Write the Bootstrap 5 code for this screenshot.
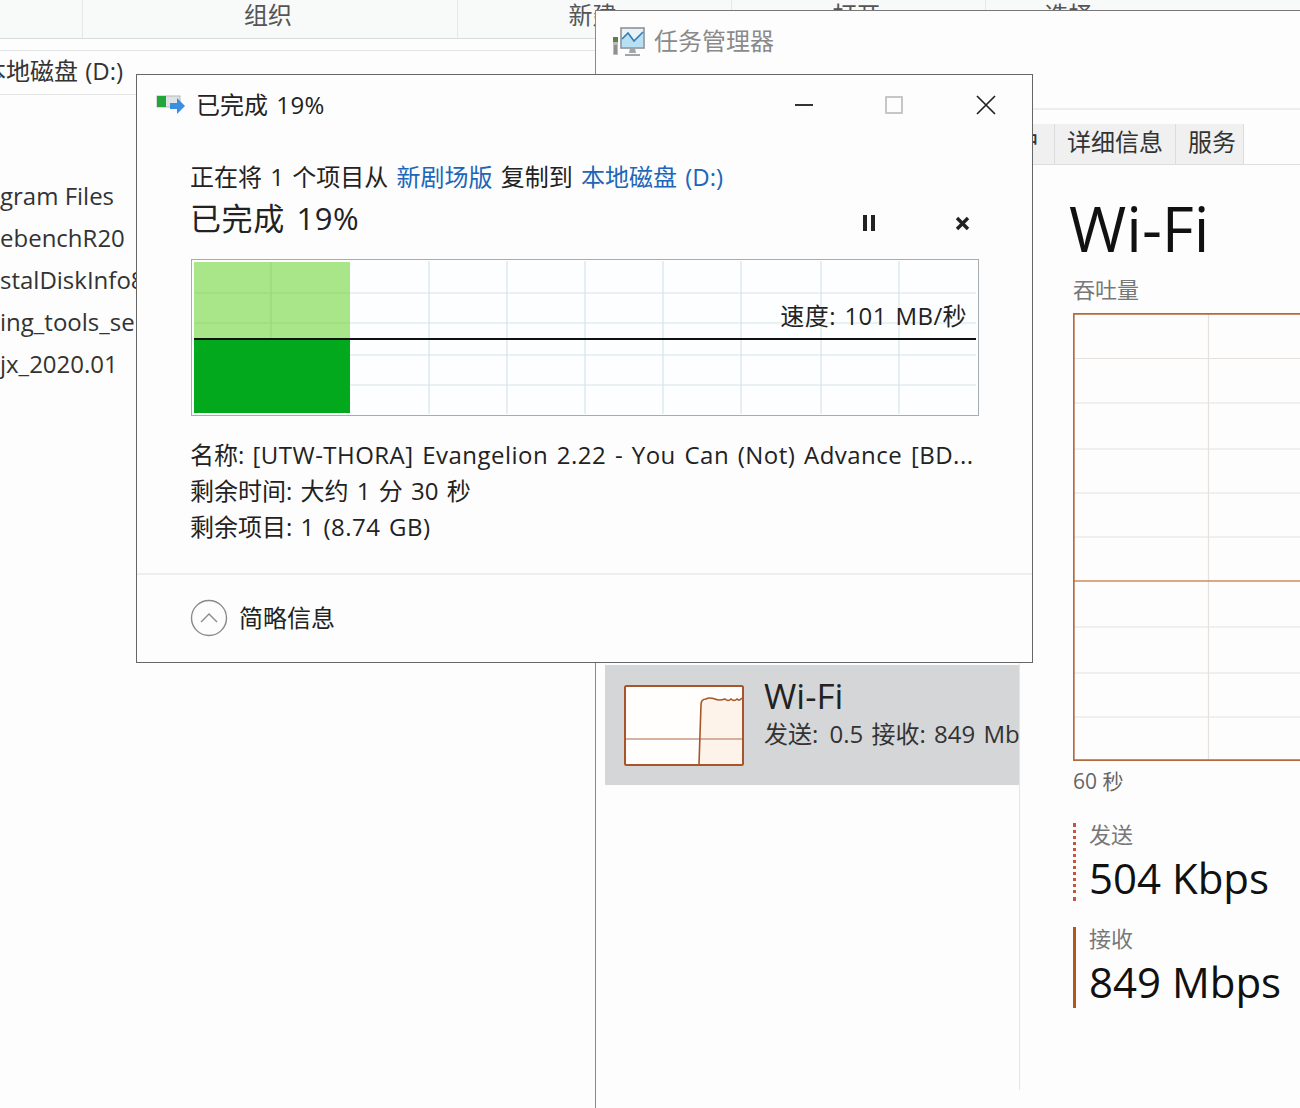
<!DOCTYPE html>
<html lang="zh-CN">
<head>
<meta charset="utf-8">
<title>已完成 19%</title>
<link href="https://cdn.jsdelivr.net/npm/bootstrap@5.3.0/dist/css/bootstrap.min.css" rel="stylesheet">
<style>
html,body{margin:0;padding:0}
body{width:1300px;height:1108px;position:relative;overflow:hidden;background:#fdfdfe;color:#222;font-family:"Open Sans","Noto Sans CJK SC",sans-serif;font-size:24px;line-height:36px}
.win{position:absolute;background:#fdfdfe}
.latin{letter-spacing:.47px}
/* explorer */
.win-explorer{left:0;top:0;width:1300px;height:1108px}
.ribbon{height:39px;background:#f8f9f9;border-bottom:1px solid #d9dadb;color:#555}
.ribbon-cell{border-left:1px solid #e6e7e7;height:38px;line-height:30px;text-align:center;padding-right:4px;white-space:nowrap}
.cell-a{width:82px;border-left:0}.cell-b{width:375px}.cell-c{width:274px}.cell-d{width:254px}.cell-e{width:170px}
.addr{margin-top:11px;height:45px;border-top:1px solid #e4e5e5;border-bottom:1px solid #e4e5e5;line-height:40px;color:#333}
.addr-text{margin-left:-18px;word-spacing:1px}
.files{margin-top:80px;line-height:42px;color:#333}
/* task manager */
.win-tm{left:595px;top:10px;width:705px;height:1098px;border-left:1px solid #8a8a8a;border-top:1px solid #777}
.tm-title{height:99px;padding:14px 0 0 16px;border-bottom:2px solid #eeeeee;color:#8a8a8a;line-height:32px}
.tm-tabs{height:41px;margin-top:14px;padding-left:384px;border-bottom:1px solid #ddd}
.tm-tab{height:40px;line-height:36px;padding:0 0 0 12px;background:#f0f0f0;border-right:1px solid #dcdcdc;color:#333;white-space:nowrap}
.tm-tab-long{width:121px}.tm-tab-short{width:68px}.tm-tab-user{width:75px}
.tm-body{height:925px}
.tm-left{width:424px;padding:500px 0 0 9px;border-right:1px solid #e6e6e6;overflow:hidden}
.wifi-item{height:120px;background:#d5d6d8;padding:20px 0 0 19px;gap:20px;overflow:hidden}
.thumb{width:120px;height:81px;flex:none;display:block}
.wifi-name{font-size:35px;line-height:36px;margin-top:-7px;color:#222}
.wifi-sub{line-height:36px;white-space:nowrap;color:#333;margin-top:2px;word-spacing:2px}
.sub-val{margin-left:3px}
.tm-right{padding-left:53px;flex:1;overflow:hidden}
.big-name{font-size:62px;line-height:70px;margin-top:28px;margin-left:-4px;color:#111}
.lbl{font-size:22px;line-height:22px;color:#777}
.lbl-first{margin-top:15px;margin-bottom:13px}
.tp-chart{display:block;width:227px;height:449px}
.sec{font-size:21px;line-height:30px;color:#666;margin-top:4px}
.stat{padding-left:13px}
.stat-send{margin-top:27px;border-left:3px dotted #c8553a;height:78px}
.stat-recv{margin-top:26px;border-left:3px solid #b5561f;height:81px}
.stat-val{font-size:42px;line-height:46px;color:#111;margin-top:10px;white-space:nowrap}
/* copy dialog */
.win-copy{left:136px;top:74px;width:897px;height:589px;border:1px solid #666;color:#222;word-spacing:2px}
.copy-title{height:60px;padding-left:19px;gap:10px}
.copy-ctrls{margin-left:auto;padding-right:36px}
.ctrl-min{width:18px;height:2px;background:#333;margin-right:72px}
.ctrl-max{width:18px;height:18px;border:2px solid #c4c6c8;border-radius:1px;margin-right:73px}
.copy-main{padding:24px 53px 0 53px}
.copy-link{color:#2066b8}
.copy-pct{font-size:31px;height:46px;line-height:46px;word-spacing:3px;letter-spacing:.6px}
.pct-ctrls{margin-left:auto;margin-top:10px;padding-right:9px;gap:79px}
.graph{margin-top:18px;margin-left:1px;height:157px;width:788px;position:relative;display:block}
.graph svg{display:block;width:788px;height:157px}
.speed{position:absolute;right:12px;top:39px;line-height:36px;white-space:nowrap;letter-spacing:.4px}
.info{margin-top:21px;white-space:nowrap}
.copy-foot{margin-top:28px;border-top:2px solid #eeeeee;height:88px;padding-left:53px;gap:11px}
</style>
</head>
<body>

<section class="win win-explorer">
  <div class="ribbon d-flex">
    <div class="ribbon-cell cell-a"></div>
    <div class="ribbon-cell cell-b">组织</div>
    <div class="ribbon-cell cell-c">新建</div>
    <div class="ribbon-cell cell-d">打开</div>
    <div class="ribbon-cell cell-e">选择</div>
  </div>
  <div class="addr"><div class="addr-text">本地磁盘 (D:)</div></div>
  <div class="files d-flex flex-column">
    <div>gram Files</div>
    <div>ebenchR20</div>
    <div>stalDiskInfo8</div>
    <div>ing_tools_se</div>
    <div>jx_2020.01</div>
  </div>
</section>

<section class="win win-tm">
  <div class="tm-title d-flex align-items-start gap-2">
    <svg width="34" height="32" viewBox="0 0 34 32" aria-hidden="true">
      <rect x="1" y="12" width="5" height="18" fill="#b9bcb9"/><rect x="1" y="12" width="5" height="5" fill="#5e7f4c"/><rect x="2" y="20" width="3" height="9" fill="#8d908c"/>
      <rect x="9" y="3" width="23" height="20" fill="#e9f2f8" stroke="#8d9295" stroke-width="1.6"/>
      <path d="M10 14 L16 8 L22 16 L31 7 L31 22 L10 22Z" fill="#b9dff3"/>
      <path d="M10 14 L16 8 L22 16 L31 7" fill="none" stroke="#2f7fb5" stroke-width="1.6"/>
      <path d="M18 23h5l1 5h-7zM13 29h15v2h-15z" fill="#a2a6a8"/>
    </svg>
    <div>任务管理器</div>
  </div>
  <div class="tm-tabs d-flex">
    <div class="tm-tab tm-tab-user">用户</div>
    <div class="tm-tab tm-tab-long">详细信息</div>
    <div class="tm-tab tm-tab-short">服务</div>
  </div>
  <div class="tm-body d-flex">
    <div class="tm-left">
      <div class="wifi-item d-flex">
        <svg class="thumb" viewBox="0 0 120 81" aria-hidden="true">
          <rect x="1" y="1" width="118" height="79" rx="1.5" fill="#fffefd" stroke="#a9552a" stroke-width="2"/>
          <path d="M75 79 L77 20 Q77 14 82 14 L118 14 L118 79Z" fill="#fdf3ea"/>
          <line x1="2" y1="54" x2="118" y2="54" stroke="#c79a80" stroke-width="1.3"/>
          <path d="M75 79 L77 20 Q77 14 82 14 C85 12 88 13 91 14 C95 16 98 15 101 14 C103 16 105 16 107 14 C109 16 111 16 113 14 C115 16 116 15 118 13" fill="none" stroke="#a9552a" stroke-width="1.6"/>
        </svg>
        <div>
          <div class="wifi-name">Wi-Fi</div>
          <div class="wifi-sub">发送: <span class="sub-val">0.5</span> 接收: 849 Mbps</div>
        </div>
      </div>
    </div>
    <div class="tm-right">
      <div class="big-name">Wi-Fi</div>
      <div class="lbl lbl-first">吞吐量</div>
      <svg class="tp-chart" viewBox="1073 313 227 449" aria-hidden="true">
        <g stroke="#e6e1dc" stroke-width="1.2">
          <line x1="1208.5" y1="313" x2="1208.5" y2="761"/>
          <line x1="1073" y1="358.5" x2="1300" y2="358.5"/><line x1="1073" y1="403" x2="1300" y2="403"/>
          <line x1="1073" y1="449" x2="1300" y2="449"/><line x1="1073" y1="493" x2="1300" y2="493"/>
          <line x1="1073" y1="537" x2="1300" y2="537"/><line x1="1073" y1="627" x2="1300" y2="627"/>
          <line x1="1073" y1="673" x2="1300" y2="673"/><line x1="1073" y1="717" x2="1300" y2="717"/>
        </g>
        <line x1="1073" y1="581" x2="1300" y2="581" stroke="#d08a5c" stroke-width="1.6"/>
        <path d="M1300 313.8H1073.8V760.2H1300" fill="none" stroke="#b5693a" stroke-width="1.7"/>
      </svg>
      <div class="sec">60 秒</div>
      <div class="stat stat-send">
        <div class="lbl">发送</div>
        <div class="stat-val">504 Kbps</div>
      </div>
      <div class="stat stat-recv">
        <div class="lbl">接收</div>
        <div class="stat-val">849 Mbps</div>
      </div>
    </div>
  </div>
</section>

<section class="win win-copy">
  <div class="copy-title d-flex align-items-center">
    <svg width="30" height="24" viewBox="0 0 30 24" aria-hidden="true">
      <rect x="1" y="3" width="23" height="11" fill="#dfe3e5" stroke="#b5b9bb"/>
      <rect x="1" y="3" width="9" height="11" fill="#22a63a"/>
      <path d="M14 10h7V5l8 8-8 8v-5h-7z" fill="#3a8fe0"/>
    </svg>
    <div>已完成 <span class="latin">19%</span></div>
    <div class="copy-ctrls d-flex align-items-center">
      <div class="ctrl-min"></div>
      <div class="ctrl-max"></div>
      <svg width="20" height="20" viewBox="0 0 20 20" aria-hidden="true"><path d="M1 1 19 19M19 1 1 19" stroke="#222" stroke-width="1.7"/></svg>
    </div>
  </div>
  <div class="copy-main">
    <div>正在将 1 个项目从 <span class="copy-link">新剧场版</span> 复制到 <span class="copy-link">本地磁盘 (D:)</span></div>
    <div class="copy-pct d-flex align-items-center">
      <div>已完成 19%</div>
      <div class="pct-ctrls d-flex align-items-center">
        <svg width="14" height="16" viewBox="0 0 14 16" aria-hidden="true"><rect x="1" y="0" width="4" height="16" fill="#222"/><rect x="9" y="0" width="4" height="16" fill="#222"/></svg>
        <svg width="15" height="15" viewBox="0 0 15 15" aria-hidden="true"><path d="M2 2 13 13M13 2 2 13" stroke="#222" stroke-width="3.4"/></svg>
      </div>
    </div>
    <div class="graph">
      <svg viewBox="191 259 788 157" aria-hidden="true">
        <rect x="191.5" y="259.5" width="787" height="156" fill="#fdfeff" stroke="#a9acae"/>
        <g stroke="#d6e4e4" stroke-width="1.2">
          <line x1="429" y1="261" x2="429" y2="414"/><line x1="507" y1="261" x2="507" y2="414"/>
          <line x1="585" y1="261" x2="585" y2="414"/><line x1="663" y1="261" x2="663" y2="414"/>
          <line x1="741" y1="261" x2="741" y2="414"/><line x1="821" y1="261" x2="821" y2="414"/>
          <line x1="899" y1="261" x2="899" y2="414"/>
          <line x1="350" y1="293" x2="976" y2="293"/><line x1="350" y1="323" x2="976" y2="323"/>
          <line x1="350" y1="355" x2="976" y2="355"/><line x1="350" y1="385" x2="976" y2="385"/>
        </g>
        <rect x="194" y="262" width="156" height="77" fill="#a9e68a"/>
        <g stroke="#98d97c" stroke-width="1.2">
          <line x1="271" y1="262" x2="271" y2="339"/><line x1="194" y1="293" x2="350" y2="293"/><line x1="194" y1="323" x2="350" y2="323"/>
        </g>
        <rect x="194" y="339" width="156" height="74" fill="#02a91d"/>
        <line x1="194" y1="339" x2="976" y2="339" stroke="#111" stroke-width="2"/>
      </svg>
      <div class="speed">速度: 101 MB/秒</div>
    </div>
    <div class="info">
      <div>名称: <span class="latin">[UTW-THORA] Evangelion 2.22 - You Can (Not) Advance [BD...</span></div>
      <div>剩余时间: 大约 1 分 30 秒</div>
      <div>剩余项目: <span class="latin">1 (8.74 GB)</span></div>
    </div>
  </div>
  <div class="copy-foot d-flex align-items-center">
    <svg width="38" height="38" viewBox="0 0 38 38" aria-hidden="true"><circle cx="19" cy="19" r="17.5" fill="none" stroke="#8a8a8a" stroke-width="1.4"/><path d="M11 23 19 15 27 23" fill="none" stroke="#8a8a8a" stroke-width="1.4"/></svg>
    <div>简略信息</div>
  </div>
</section>

<script src="https://cdn.jsdelivr.net/npm/bootstrap@5.3.0/dist/js/bootstrap.bundle.min.js"></script>
</body>
</html>
